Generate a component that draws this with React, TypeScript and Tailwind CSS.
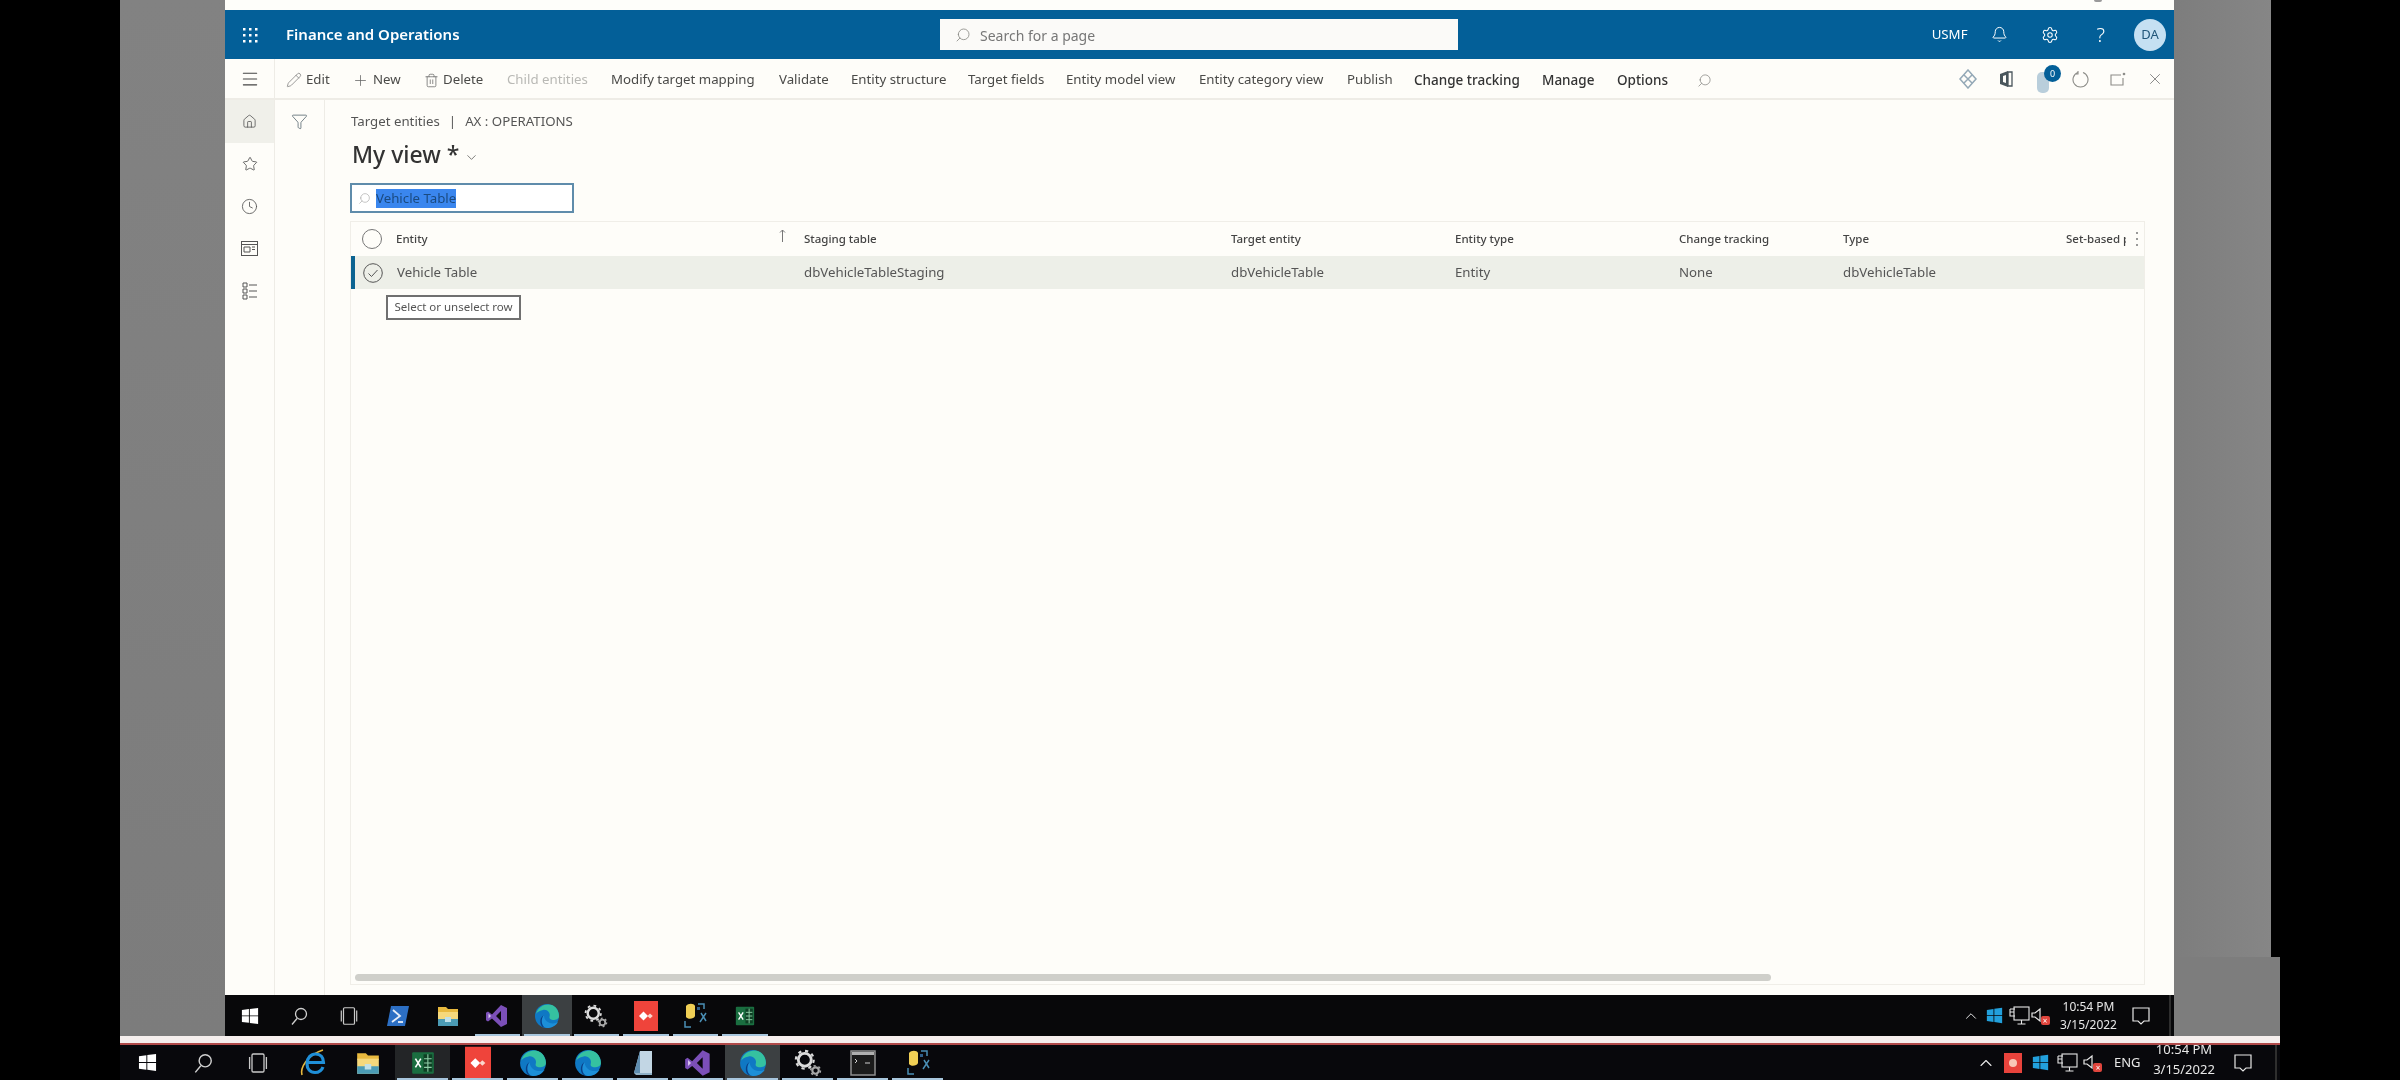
import React from "react";
import { Bell, ChevronDown, Clock, Filter, Home, Menu, Pencil, Plus, Search, Settings, Star, Trash2, X, ChevronUp } from "lucide-react";

const SANS = "font-['Noto_Sans','Open_Sans',sans-serif]";

const MirrorSearch = ({ s = 14, c = "#8a8a86" }: { s?: number; c?: string }) => (
  <Search size={s} color={c} strokeWidth={1.25} className="-scale-x-100 shrink-0" />
);

const Cmd = ({ w, label, icon, cls = "text-[#4a4a48] text-[13.25px]" }: { w: string; label: string; icon?: React.ReactNode; cls?: string }) => (
  <div className={`flex items-center gap-[4px] shrink-0 whitespace-nowrap ${w} ${cls}`}>
    {icon}
    <span>{label}</span>
  </div>
);

const WinLogo = ({ s = 18, c = "#ffffff" }: { s?: number; c?: string }) => (
  <svg width={s} height={s} viewBox="0 0 20 20">
    <path fill={c} d="M1 3.4 8.8 2.3v7.1H1zM9.8 2.2 19 1v8.4H9.8zM1 10.4h7.8v7.2L1 16.6zM9.8 10.4H19V19l-9.2-1.3z" />
  </svg>
);
const TaskView = ({ s = 20 }: { s?: number }) => (
  <svg width={s} height={s} viewBox="0 0 20 20" fill="none" stroke="#c9c9c9" strokeWidth="1.1">
    <rect x="5" y="2.5" width="10" height="15" rx="1" />
    <path d="M3 5v10M17 5v10" />
  </svg>
);
const TaskSearch = ({ s = 20 }: { s?: number }) => (
  <svg width={s} height={s} viewBox="0 0 20 20" fill="none" stroke="#d0d0d0" strokeWidth="1.3">
    <circle cx="12" cy="8" r="5.5" />
    <path d="M8 12.5 3 18.5" />
  </svg>
);
const Edge = ({ s = 26 }: { s?: number }) => (
  <svg width={s} height={s} viewBox="0 0 26 26">
    <circle cx="13" cy="13" r="12" fill="#0f78c4" />
    <path d="M2 11C4 3 12 0 18 2c4 1.500 7 6 7 11 0 3-3 4-6 4-2 0-4-1-3.500-3C17 10 13 6 9 7 5 8 3 9 2 11Z" fill="#35c1a0" />
    <path d="M8.500 24C5 20 6 14 10 12c-2 4-1 9 4 12-2 .5-4 .5-5.500 0Z" fill="#0b3f86" />
    <path d="M13 25c5 0 9-2.500 11-6-3 2-8 2-11-.5-2-1.700-3-3.500-3-6.500-3 3-3 9 0 12 1 .6 2 1 3 1Z" fill="#1c8fd8" />
  </svg>
);
const Excel = ({ s = 24 }: { s?: number }) => (
  <svg width={s} height={s} viewBox="0 0 24 24">
    <rect x="2" y="2" width="20" height="20" rx="1" fill="#1a6e40" />
    <rect x="12.500" y="4" width="8" height="16" fill="#0e3f24" />
    <path d="M13 8h7M13 12h7M13 16h7M16.500 4v16" stroke="#8fd0a8" strokeWidth="1" />
    <path d="M5 8l5 8M10 8l-5 8" stroke="#fff" strokeWidth="1.500" />
  </svg>
);
const Any = ({ w = 24, h = 30 }: { w?: number; h?: number }) => (
  <svg width={w} height={h} viewBox="0 0 24 30">
    <rect width="24" height="30" fill="#ef443b" />
    <path d="M9.500 10.500l4.500 4.500-4.500 4.500L5 15z" fill="#fff" />
    <path d="M16 12.500l2.800 2.500-2.800 2.500-2.500-2.500z" fill="#fbd6cc" />
  </svg>
);
const VS = ({ s = 24 }: { s?: number }) => (
  <svg width={s} height={s} viewBox="0 0 24 24">
    <path d="M16 1l6 3v16l-6 3-9-8.500-4 3-2-1.200V8.700l2-1.200 4 3zM16 7l-5 5 5 5z" fill="#7b4fb8" />
    <path d="M3.500 9.500v5L6 12z" fill="#d9c8ee" />
  </svg>
);
const Folder = ({ s = 24 }: { s?: number }) => (
  <svg width={s} height={s} viewBox="0 0 24 24">
    <path d="M2 3h8l2 2h10v4H2z" fill="#e8b93e" />
    <rect x="2" y="8" width="20" height="14" fill="#f5d87c" />
    <rect x="2" y="15" width="20" height="7" fill="#4b9bb5" />
    <rect x="9" y="13" width="6" height="5" fill="#bfe0ea" />
  </svg>
);
const Gear2 = ({ s = 26 }: { s?: number }) => (
  <svg width={s} height={s} viewBox="0 0 26 26" fill="none">
    <circle cx="10" cy="10" r="6" stroke="#dcdcdc" strokeWidth="2.600" />
    <circle cx="10" cy="10" r="8.300" stroke="#dcdcdc" strokeWidth="2" strokeDasharray="3 3.520" />
    <circle cx="20" cy="20" r="3" stroke="#a8a8a8" strokeWidth="2" />
    <circle cx="20" cy="20" r="4.500" stroke="#a8a8a8" strokeWidth="1.500" strokeDasharray="2 2.700" />
  </svg>
);
const PS = () => (
  <svg width="24" height="24" viewBox="0 0 24 24">
    <path d="M5 2h18l-4 20H1z" fill="#2c6fc4" />
    <path d="M7 6l7 6-8 6" fill="none" stroke="#e8eef8" strokeWidth="1.800" />
    <path d="M12 18h5" stroke="#e8eef8" strokeWidth="1.800" />
  </svg>
);
const Sticky = () => (
  <svg width="24" height="26" viewBox="0 0 24 26">
    <path d="M3 3c2-3 8-3 9 0v10c-1 3-7 4-9 1z" fill="#f0cf55" />
    <path d="M15 1h6v5M2 18v6h6M18 10l5 8M23 10l-6 9" fill="none" stroke="#4a8fb5" strokeWidth="1.500" />
    <path d="M14 4h3v3h-3z" fill="#2f5f8a" />
  </svg>
);
const IE = () => (
  <svg width="28" height="30" viewBox="0 0 28 30" fill="none">
    <path d="M3 27C1 20 8 7 24 2" stroke="#e8b93e" strokeWidth="1.600" />
    <path d="M24 19c-1.500 4-5 5.500-8 5.500-5 0-8-3.500-8-9s4-9.500 8.500-9.500c5 0 8 3.500 8 8.500H9" stroke="#1f8fd8" strokeWidth="3.200" />
  </svg>
);
const Notepad = () => (
  <svg width="22" height="28" viewBox="0 0 22 28">
    <path d="M8 2h12v22H2z" fill="#c2d6e4" />
    <path d="M8 2 2 24l6 1z" fill="#5f8db0" />
    <path d="M2 24h18v2H4z" fill="#8fb0c6" />
  </svg>
);
const Cmdp = () => (
  <svg width="26" height="26" viewBox="0 0 26 26">
    <rect x="1" y="1" width="24" height="24" fill="#1b1b1b" stroke="#8e8e8e" strokeWidth="1.500" />
    <rect x="2" y="2" width="22" height="3" fill="#b0b0b0" />
    <path d="M5 9l2 2-2 2M15 13h5" stroke="#d0d0d0" strokeWidth="1" fill="none" />
  </svg>
);
const Net = () => (
  <svg width="24" height="22" viewBox="0 0 24 22" fill="none" stroke="#e8e8e8" strokeWidth="1.100">
    <rect x="6" y="2" width="15" height="13" />
    <path d="M13.500 15v4M9.500 19h8" />
    <path d="M2 4h5M2 4v7h5M2 7h4" />
  </svg>
);
const Speaker = () => (
  <div className="relative w-[20px] h-[20px]">
    <svg width="14" height="18" viewBox="0 0 14 18" fill="none" stroke="#e8e8e8" strokeWidth="1.200">
      <path d="M2 7v4h3l5 4V3L5 7z" />
    </svg>
    <div className="absolute right-0 bottom-[1px] w-[9px] h-[9px] bg-[#e0453d] rounded-[2px] text-white text-[8px] leading-[9px] text-center">×</div>
  </div>
);
const Notif = () => (
  <svg width="20" height="20" viewBox="0 0 20 20" fill="none" stroke="#e8e8e8" strokeWidth="1.200">
    <path d="M2 2h16v13h-5l-3 3-3-3H2z" />
  </svg>
);

const Item = ({ w, node, active, under, dim }: { w: string; node: React.ReactNode; active?: boolean; under?: boolean; dim?: boolean }) => (
  <div className={`relative h-full flex items-center justify-center shrink-0 ${w} ${active ? (dim ? "bg-[#232527]" : "bg-[#3c4042]") : ""}`}>
    {node}
    {under && <div className="absolute left-[2px] right-[2px] bottom-0 h-[2px] bg-[#a8c6dd]" />}
  </div>
);

const COL = "grid grid-cols-[45px_408px_427px_224px_224px_164px_223px_1fr] items-center";
const HEAVY = "text-[#333] text-[13.5px] font-medium";

export default function App() {
  const t1: [React.ReactNode, boolean?, boolean?, boolean?][] = [
    [<WinLogo s={18} />], [<TaskSearch s={20} />], [<TaskView s={22} />], [<PS />], [<Folder />],
    [<VS />, false, true], [<Edge s={26} />, true, true], [<Gear2 s={24} />, false, true],
    [<Any w={24} h={30} />, false, true], [<Sticky />, false, true], [<Excel s={22} />, false, true],
  ];
  const t2: [React.ReactNode, boolean?, boolean?, boolean?][] = [
    [<WinLogo s={19} />], [<TaskSearch s={22} />], [<TaskView s={24} />], [<IE />], [<Folder s={26} />],
    [<Excel s={26} />, true, true, true], [<Any w={26} h={34} />, false, true], [<Edge s={28} />, false, true],
    [<Edge s={28} />, false, true], [<Notepad />, false, true], [<VS s={28} />, false, true],
    [<Edge s={28} />, true, true], [<Gear2 s={28} />, false, true], [<Cmdp />, false, true], [<Sticky />, false, true],
  ];
  return (
    <div className={`relative w-[2400px] h-[1080px] bg-black overflow-hidden flex flex-col blur-[0.4px] ${SANS}`}>
      <div className="flex h-[1036px] shrink-0">
        <div className="w-[120px] shrink-0 bg-black" />
        <div className="w-[105px] shrink-0 bg-gradient-to-b from-[#828282] to-[#7c7c7c]" />
        {/* window */}
        <div className="w-[1949px] shrink-0 flex flex-col bg-[#fefdf9]">
          <div className="h-[10px] shrink-0 bg-[#fefefa] flex justify-end pr-[72px]">
            <div className="w-[8px] h-[2px] rounded-b-full bg-[#9a9a9a]" />
          </div>
          <div className="h-[49px] shrink-0 bg-[#035f98] flex items-center relative">
            <div className="w-[50px] flex justify-center">
              <svg width="18" height="18" viewBox="0 0 18 18" fill="#fff">
                {[2, 8, 14].flatMap((y) => [2, 8, 14].map((x) => <rect key={`${x}-${y}`} x={x} y={y} width="2.500" height="2.500" />))}
              </svg>
            </div>
            <span className="ml-[11px] text-[15px] font-semibold text-white whitespace-nowrap">Finance and Operations</span>
            <div className="absolute left-[715px] top-[9px] w-[518px] h-[31px] bg-[#fbfaf8] flex items-center pl-[15px] gap-[9px] text-[14px] text-[#777]">
              <MirrorSearch s={16} />
              <span className="mt-[1px]">Search for a page</span>
            </div>
            <div className="ml-auto flex items-center text-white h-full">
              <span className="text-[13.25px] mr-[23px]">USMF</span>
              <Bell size={17} strokeWidth={1.4} className="mr-[33px]" />
              <Settings size={18} strokeWidth={1.4} className="mr-[38px]" />
              <span className="text-[20px] font-light mr-[29px] leading-none">?</span>
              <div className="w-[32px] h-[32px] rounded-full bg-[#c5e0f2] text-[#22577a] text-[13px] flex items-center justify-center mr-[8px]">DA</div>
            </div>
          </div>
          <div className="h-[41px] shrink-0 flex items-center border-b-2 border-[#eeece6]">
            <div className="w-[50px] h-full flex items-center justify-center border-r border-[#eeece6] shrink-0">
              <Menu size={20} strokeWidth={1.3} color="#444" />
            </div>
            <div className="flex items-center pl-[11px] pt-[3px]">
              <Cmd w="w-[66px]" label="Edit" icon={<Pencil size={16} strokeWidth={1.1} color="#777" />} />
              <Cmd w="w-[72px]" label="New" icon={<Plus size={17} strokeWidth={1.1} color="#666" />} />
              <Cmd w="w-[83px]" label="Delete" icon={<Trash2 size={15} strokeWidth={1.2} color="#666" />} />
              <Cmd w="w-[104px]" label="Child entities" cls="text-[#b9b9b5] text-[13.25px]" />
              <Cmd w="w-[168px]" label="Modify target mapping" />
              <Cmd w="w-[72px]" label="Validate" />
              <Cmd w="w-[117px]" label="Entity structure" />
              <Cmd w="w-[98px]" label="Target fields" />
              <Cmd w="w-[133px]" label="Entity model view" />
              <Cmd w="w-[148px]" label="Entity category view" />
              <Cmd w="w-[67px]" label="Publish" />
              <Cmd w="w-[128px]" label="Change tracking" cls={HEAVY} />
              <Cmd w="w-[75px]" label="Manage" cls={HEAVY} />
              <Cmd w="w-[80px]" label="Options" cls={HEAVY} />
              <MirrorSearch s={15} />
            </div>
            <div className="ml-auto flex items-center h-full">
              <div className="w-[38px] flex justify-center">
                <svg width="18" height="20" viewBox="0 0 18 20" fill="none" stroke="#93a8b6" strokeWidth="1.500"><path d="M9 1l8 9-8 9-8-9z" /><path d="M5 6l8 8M13 6l-8 8" /></svg>
              </div>
              <div className="w-[38px] flex justify-center">
                <svg width="14" height="18" viewBox="0 0 14 18"><path d="M1 4l8-3v16l-8-3z" fill="#4a565c" /><path d="M9 2h4v14H9z" fill="none" stroke="#4a565c" strokeWidth="1.300" /><path d="M4 6v6l3 1V5z" fill="#fefdf9" /></svg>
              </div>
              <div className="w-[37px] flex justify-center relative h-full">
                <div className="absolute left-[12px] top-[13px] w-[12px] h-[21px] rounded-[5px] bg-[#b9cedb]" />
                <div className="absolute left-[19px] top-[6px] w-[17px] h-[17px] rounded-full bg-[#035f98] text-white text-[9px] flex items-center justify-center">0</div>
              </div>
              <div className="w-[37px] flex justify-center">
                <svg width="18" height="18" viewBox="0 0 18 18" fill="none" stroke="#8b8b87" strokeWidth="1.100"><path d="M6 2.500a7.500 7.500 0 1 0 5 0" /><path d="M6 1v3h-2" /></svg>
              </div>
              <div className="w-[37px] flex justify-center">
                <svg width="16" height="14" viewBox="0 0 16 14" fill="none" stroke="#8b8b87" strokeWidth="1.100"><path d="M11 3H1v10h12V6" /><circle cx="14" cy="2" r=".8" fill="#8b8b87" /></svg>
              </div>
              <div className="w-[38px] flex justify-center">
                <X size={18} strokeWidth={1} color="#666" />
              </div>
            </div>
          </div>
          <div className="flex-1 flex min-h-0">
            <div className="w-[50px] shrink-0 border-r border-[#eeece6] flex flex-col">
              <div className="h-[43px] bg-[#f0f0ea] flex items-center justify-center"><Home size={15} strokeWidth={1.3} color="#555" /></div>
              <div className="h-[42px] flex items-center justify-center"><Star size={16} strokeWidth={1.3} color="#555" /></div>
              <div className="h-[42px] flex items-center justify-center"><Clock size={17} strokeWidth={1.2} color="#555" /></div>
              <div className="h-[42px] flex items-center justify-center">
                <svg width="17" height="15" viewBox="0 0 17 15" fill="none" stroke="#555" strokeWidth="1"><rect x=".5" y=".5" width="16" height="14" /><path d="M.5 3.500h16M3 6h6v5H3zM11 6h3M11 8.500h3" /></svg>
              </div>
              <div className="h-[44px] flex items-center justify-center">
                <svg width="16" height="18" viewBox="0 0 16 18" fill="none" stroke="#555" strokeWidth="1"><path d="M1 1h4v4H1zM1 7h4v4H1zM1 13h4v4H1zM7 3h8M7 9h8M7 15h8" /></svg>
              </div>
            </div>
            <div className="w-[50px] shrink-0 border-r border-[#eeece6] flex justify-center pt-[13px]">
              <Filter size={17} strokeWidth={1.1} color="#50606a" />
            </div>
            <div className="flex-1 flex flex-col pl-[25px] pr-[29px] min-w-0">
              <div className="h-[20px] mt-[12px] shrink-0 flex items-center pl-[1px] text-[13.25px] text-[#555] whitespace-nowrap">
                <span>Target entities</span>
                <span className="mx-[9px]">|</span>
                <span>AX : OPERATIONS</span>
              </div>
              <div className="h-[36px] mt-[4px] shrink-0 flex items-center pl-[2px] text-[#333] whitespace-nowrap">
                <span className="text-[23px] font-medium">My view *</span>
                <ChevronDown size={15} strokeWidth={1} className="ml-[5px] mt-[6px]" />
              </div>
              <div className="w-[224px] h-[30px] mt-[11px] shrink-0 border-2 border-[#5f8cab] bg-white flex items-center pl-[6px] gap-[5px] text-[13.25px]">
                <MirrorSearch s={13} c="#aaa" />
                <span className="bg-[#3a86ee] text-[#1a4a80] h-[19px] leading-[19px] mt-[1px]">Vehicle Table</span>
              </div>
              <div className="relative flex-1 mt-[8px] mb-[10px] border border-[#f0eee8] flex flex-col min-h-0">
                <div className={`${COL} h-[34px] shrink-0 text-[11.5px] font-medium text-[#444] whitespace-nowrap`}>
                  <div className="flex justify-center -ml-[4px]"><div className="w-[20px] h-[20px] rounded-full border border-[#777]" /></div>
                  <div className="relative"><span>Entity</span>
                    <svg width="7" height="14" viewBox="0 0 7 14" fill="none" stroke="#777" strokeWidth="1" className="absolute left-[383px] -top-[1px]"><path d="M3.500 13V1M1 3.500 3.500 1 6 3.500" /></svg>
                  </div>
                  <div>Staging table</div>
                  <div>Target entity</div>
                  <div>Entity type</div>
                  <div>Change tracking</div>
                  <div>Type</div>
                  <div className="flex items-center">
                    <span className="w-[60px] overflow-hidden">Set-based processing</span>
                    <svg width="4" height="18" viewBox="0 0 4 18" fill="#777" className="ml-[9px]"><circle cx="2" cy="3" r="1" /><circle cx="2" cy="9" r="1" /><circle cx="2" cy="15" r="1" /></svg>
                  </div>
                </div>
                <div className={`${COL} h-[33px] shrink-0 bg-[#edefe8] border-l-[4px] border-[#0b6391] text-[13.25px] text-[#555] whitespace-nowrap`}>
                  <div className="flex justify-center -ml-[10px]">
                    <svg width="20" height="20" viewBox="0 0 20 20" fill="none" stroke="#555" strokeWidth="1"><circle cx="10" cy="10" r="9.300" /><path d="M5.500 10.500l3 3 6-6.500" /></svg>
                  </div>
                  <div className="-ml-[3px]">Vehicle Table</div>
                  <div className="-ml-[4px]">dbVehicleTableStaging</div>
                  <div className="-ml-[4px]">dbVehicleTable</div>
                  <div className="-ml-[4px]">Entity</div>
                  <div className="-ml-[4px]">None</div>
                  <div className="-ml-[4px]">dbVehicleTable</div>
                  <div />
                </div>
                <div className="absolute left-[35px] top-[73px] w-[135px] h-[25px] border-2 border-[#707070] bg-white text-[11.5px] leading-[16px] pb-[2px] text-[#555] flex items-center justify-center whitespace-nowrap">Select or unselect row</div>
                <div className="mt-auto ml-[4px] mb-[3px] w-[1416px] h-[7px] rounded-full bg-[#cfcfca] shrink-0" />
              </div>
            </div>
          </div>
          {/* inner taskbar */}
          <div className="h-[41px] shrink-0 bg-[#08080a] flex items-center">
            <div className="flex h-full">
              {t1.map(([n, a, u, d], i) => (
                <Item key={i} w="w-[49.500px]" node={n} active={a} under={u} dim={d} />
              ))}
            </div>
            <div className="ml-auto flex items-center h-full text-[#e8e8e8] text-[12px]">
              <ChevronUp size={18} strokeWidth={1.3} className="mr-[6.500px]" />
              <WinLogo s={17} c="#22a0dc" />
              <div className="ml-[4.500px]"><Net /></div>
              <div className="-ml-[2px]"><Speaker /></div>
              <div className="w-[76px] ml-[1px] flex flex-col items-center leading-[18px]">
                <span>10:54 PM</span>
                <span>3/15/2022</span>
              </div>
              <div className="ml-[4.500px] mr-[18px]"><Notif /></div>
              <div className="w-[2px] h-full bg-[#2e2e2e] mr-[3px]" />
            </div>
          </div>
        </div>
        <div className="w-[106px] shrink-0 flex flex-col bg-black">
          <div className="w-[97px] h-[957px] bg-gradient-to-r from-[#7d7d7d] to-[#868686]" />
          <div className="w-[106px] flex-1 bg-[#7d7d7d]" />
        </div>
      </div>
      {/* band */}
      <div className="h-[9px] shrink-0 ml-[120px] w-[2160px] bg-[#f6efee] border-b-2 border-[#b04a4a]" />
      {/* outer taskbar */}
      <div className="h-[35px] shrink-0 ml-[120px] w-[2160px] bg-[#08080c] flex items-center overflow-hidden">
        <div className="flex h-full">
          {t2.map(([n, a, u, d], i) => (
            <Item key={i} w="w-[55px]" node={n} active={a} under={u} dim={d} />
          ))}
        </div>
        <div className="ml-auto flex items-center h-full text-[#e8e8e8] text-[13px]">
          <ChevronUp size={20} strokeWidth={1.3} className="mr-[8px]" />
          <div className="w-[18px] h-[20px] bg-[#e8433c] flex items-center justify-center mr-[9.500px]"><div className="w-[8px] h-[8px] rounded-full bg-[#f8c8b8]" /></div>
          <WinLogo s={17} c="#22a0dc" />
          <div className="ml-[7.500px]"><Net /></div>
          <div className="ml-[2px]"><Speaker /></div>
          <span className="ml-[11.500px]">ENG</span>
          <div className="w-[76px] ml-[5.500px] flex flex-col items-center leading-[20px] -mt-[7px]">
            <span>10:54 PM</span>
            <span>3/15/2022</span>
          </div>
          <div className="ml-[11px] mr-[22px]"><Notif /></div>
          <div className="w-[2px] h-full bg-[#2e2e2e] mr-[3px]" />
        </div>
      </div>
    </div>
  );
}
